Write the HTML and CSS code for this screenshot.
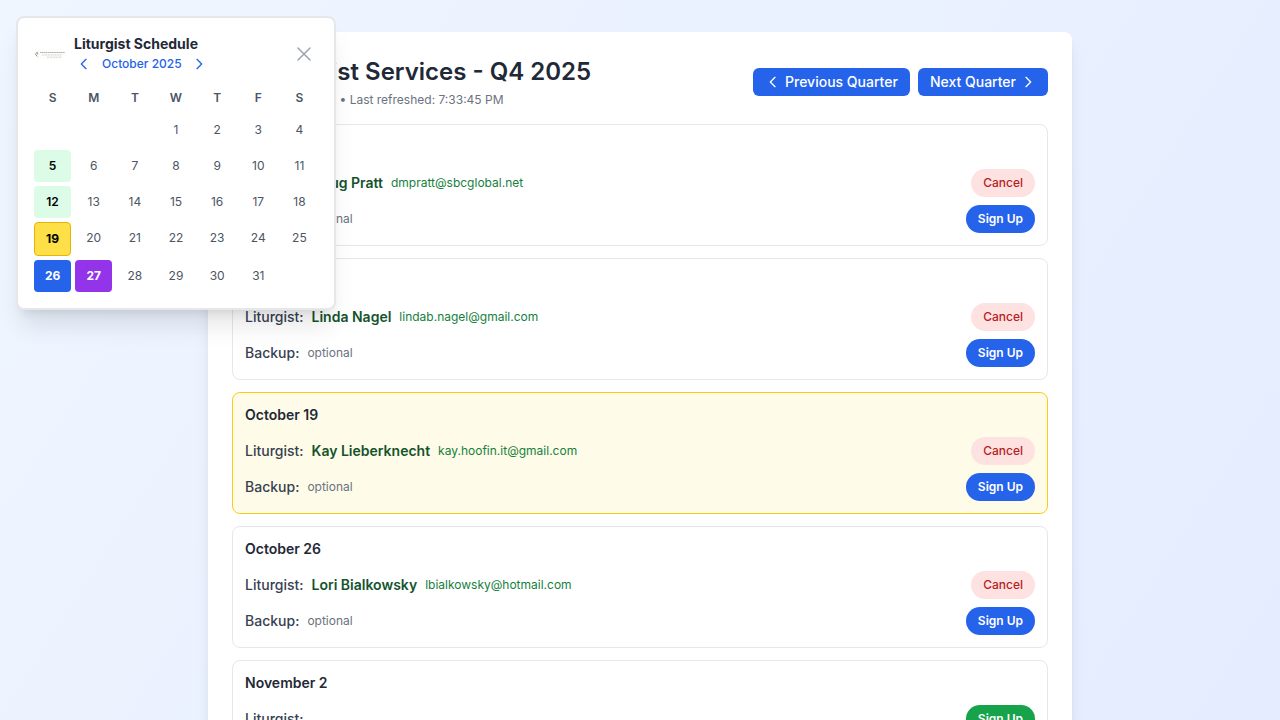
FILE: index.html
```html
<!DOCTYPE html>
<html lang="en">
<head>
<meta charset="utf-8">
<title>Liturgist Services</title>
<link rel="stylesheet" href="styles.css">
</head>
<body>
<svg class="defs" aria-hidden="true">
  <symbol id="left" viewBox="0 0 24 24"><path d="M15 19l-7-7 7-7"/></symbol>
  <symbol id="right" viewBox="0 0 24 24"><path d="M9 5l7 7-7 7"/></symbol>
  <symbol id="close" viewBox="0 0 24 24"><path d="M18 6 6 18M6 6l12 12"/></symbol>
</svg>
<div class="page">
  <main class="panel">
    <header class="panel-head">
      <div>
        <h1>Liturgist Services - Q4 2025</h1>
        <p class="meta"><span class="meta-lead"></span>• Last refreshed: 7:33:45 PM</p>
      </div>
      <div class="quarters">
        <button class="quarter"><svg class="icon"><use href="#left"/></svg>Previous Quarter</button>
        <button class="quarter">Next Quarter<svg class="icon"><use href="#right"/></svg></button>
      </div>
    </header>
    <div class="services">
      <section class="service">
        <h2>October 5</h2>
        <div class="row"><span class="role">Liturgist:</span><span class="name">Doug Pratt</span><span class="mail">dmpratt@sbcglobal.net</span><button class="pill cancel">Cancel</button></div>
        <div class="row"><span class="role">Backup:</span><span class="optional">optional</span><button class="pill backup">Sign Up</button></div>
      </section>
      <section class="service">
        <h2>October 12</h2>
        <div class="row"><span class="role">Liturgist:</span><span class="name">Linda Nagel</span><span class="mail">lindab.nagel@gmail.com</span><button class="pill cancel">Cancel</button></div>
        <div class="row"><span class="role">Backup:</span><span class="optional">optional</span><button class="pill backup">Sign Up</button></div>
      </section>
      <section class="service highlighted">
        <h2>October 19</h2>
        <div class="row"><span class="role">Liturgist:</span><span class="name">Kay Lieberknecht</span><span class="mail">kay.hoofin.it@gmail.com</span><button class="pill cancel">Cancel</button></div>
        <div class="row"><span class="role">Backup:</span><span class="optional">optional</span><button class="pill backup">Sign Up</button></div>
      </section>
      <section class="service">
        <h2>October 26</h2>
        <div class="row"><span class="role">Liturgist:</span><span class="name">Lori Bialkowsky</span><span class="mail">lbialkowsky@hotmail.com</span><button class="pill cancel">Cancel</button></div>
        <div class="row"><span class="role">Backup:</span><span class="optional">optional</span><button class="pill backup">Sign Up</button></div>
      </section>
      <section class="service">
        <h2>November 2</h2>
        <div class="row"><span class="role">Liturgist:</span><button class="pill open">Sign Up</button></div>
      </section>
    </div>
  </main>
</div>

<aside class="calendar">
  <div class="cal-head">
    <svg class="logo" viewBox="0 0 32 10">
      <rect width="32" height="10" rx="4" fill="#fdfdfc"/>
      <path d="M3.6 2.7 1.4 5.3l2 2.2M3.7 3.9v1.6" fill="none" stroke="#85857a" stroke-width=".9"/>
      <path d="M6 3.5h25" stroke="#aaa9a4" stroke-width=".9" stroke-dasharray="1.6 .3"/>
      <path d="M8 5.9h20M13 8.2h15" stroke="#d0cfcc" stroke-width=".8" stroke-dasharray="2.4 .5"/>
    </svg>
    <div class="cal-title">
      <h3>Liturgist Schedule</h3>
      <div class="month"><button class="step"><svg class="icon"><use href="#left"/></svg></button><span>October 2025</span><button class="step forward"><svg class="icon"><use href="#right"/></svg></button></div>
    </div>
    <button class="close"><svg class="icon"><use href="#close"/></svg></button>
  </div>
  <div class="days">
    <b>S</b><b>M</b><b>T</b><b>W</b><b>T</b><b>F</b><b>S</b>
    <i></i><i></i><i></i><span>1</span><span>2</span><span>3</span><span>4</span>
    <span class="filled">5</span><span>6</span><span>7</span><span>8</span><span>9</span><span>10</span><span>11</span>
    <span class="filled">12</span><span>13</span><span>14</span><span>15</span><span>16</span><span>17</span><span>18</span>
    <span class="next">19</span><span>20</span><span>21</span><span>22</span><span>23</span><span>24</span><span>25</span>
    <span class="selected">26</span><span class="today">27</span><span>28</span><span>29</span><span>30</span><span>31</span>
  </div>
</aside>
</body>
</html>
```
FILE: styles.css
```css
* { box-sizing: border-box; margin: 0; padding: 0; }
html, body { height: 720px; overflow: hidden; }
body { font-family: Inter, "Liberation Sans", sans-serif; font-size: 14px; line-height: 20px; color: #1f2937; }
button { font: inherit; color: inherit; border: 0; background: none; display: flex; align-items: center; }
.defs { display: none; }
.icon { width: 16px; height: 16px; flex: none; fill: none; stroke: currentColor; stroke-width: 2; stroke-linecap: round; stroke-linejoin: round; }

.page { height: 720px; overflow: hidden; padding: 32px 0 0; background: linear-gradient(to bottom right, #eff6ff, #e0e7ff) 0 0 / 100% 2000px; }
.panel { width: 864px; height: 1936px; margin: 0 auto; padding: 24px; background: #fff; border-radius: 8px; box-shadow: 0 10px 15px -3px rgba(0,0,0,.1), 0 4px 6px -4px rgba(0,0,0,.1); }
.panel-head { display: flex; justify-content: space-between; align-items: center; margin-bottom: 16px; }
h1 { padding-left: 32px; font-size: 24px; line-height: 32px; font-weight: 600; }
.meta { display: flex; margin-top: 4px; font-size: 12px; line-height: 16px; color: #6b7280; }
.meta-lead { width: 107.5px; }
.quarters { display: flex; gap: 8px; }
.quarter { gap: 4px; padding: 4px 12px; border-radius: 6px; background: #2563eb; color: #fff; font-weight: 500; }

.services { display: flex; flex-direction: column; gap: 12px; }
.service { display: flex; flex-direction: column; gap: 8px; padding: 12px; border: 1px solid #e5e7eb; border-radius: 8px; }
.service.highlighted { background: #fefce8; border-color: #facc15; }
h2 { font-size: 14px; line-height: 20px; font-weight: 600; margin-bottom: 4px; }
.row { display: flex; align-items: center; gap: 8px; height: 28px; }
.role { font-weight: 500; color: #374151; }
.name { font-weight: 600; color: #14532d; }
.mail { font-size: 12px; line-height: 16px; color: #15803d; }
.optional { font-size: 12px; line-height: 16px; color: #6b7280; }
.pill { margin-left: auto; height: 28px; padding: 0 12px; border-radius: 14px; font-size: 12px; line-height: 16px; font-weight: 500; color: #fff; }
.cancel { background: #fee2e2; color: #b91c1c; }
.backup { background: #2563eb; font-weight: 600; }
.open { background: #16a34a; font-weight: 600; }

.calendar { position: absolute; left: 16px; top: 16px; width: 320px; height: 294px; padding: 16px; background: #fff; border: 2px solid #e5e7eb; border-radius: 8px; box-shadow: 0 20px 25px -5px rgba(0,0,0,.1), 0 8px 10px -6px rgba(0,0,0,.1); }
.cal-head { display: flex; align-items: center; gap: 8px; margin-bottom: 12px; }
.logo { width: 32px; height: 10px; }
.cal-title { flex: 1; }
h3 { font-size: 14px; line-height: 20px; font-weight: 700; }
.month { display: flex; align-items: center; gap: 8px; height: 20px; font-size: 12px; font-weight: 500; color: #2563eb; }
.step { padding: 2px; }
.forward { margin-left: -1px; }
.close { padding: 4px; margin-right: -2px; color: #9ca3af; }
.close .icon { width: 24px; height: 24px; stroke-width: 1.5; }
.days { display: grid; grid-template-columns: repeat(7, 1fr); gap: 4px; font-size: 12px; line-height: 16px; text-align: center; color: #4b5563; }
.days b { padding: 4px 0; font-weight: 600; }
.days span { padding: 8px 0; border-radius: 4px; }
.days .filled { background: #dcfce7; color: #000; font-weight: 600; }
.days .next { background: #fde047; border: 1px solid #eab308; color: #000; font-weight: 700; }
.days .selected { background: #2563eb; color: #fff; font-weight: 700; }
.days .today { background: #9333ea; color: #fff; font-weight: 700; }
```
